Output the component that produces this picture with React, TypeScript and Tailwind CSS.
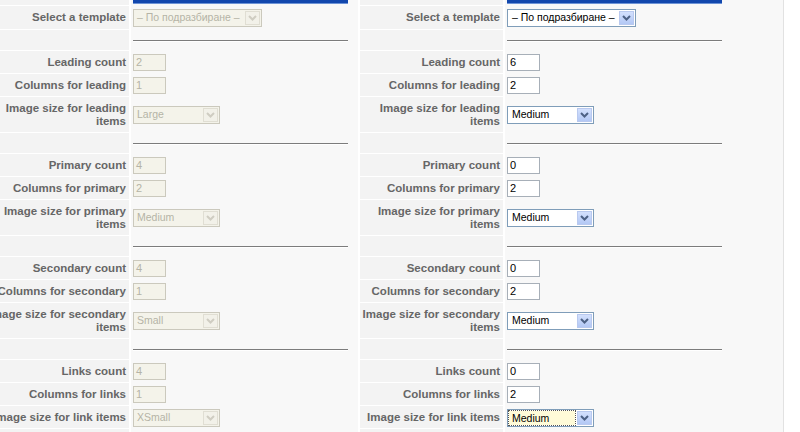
import React from "react";

type Side = { count: string; cols: string; img: string };
type Group = { count: string; cols: string; img: string; L: Side; R: Side };

const groups: Group[] = [
  { count: "Leading count", cols: "Columns for leading", img: "Image size for leading items", L: { count: "2", cols: "1", img: "Large" }, R: { count: "6", cols: "2", img: "Medium" } },
  { count: "Primary count", cols: "Columns for primary", img: "Image size for primary items", L: { count: "4", cols: "2", img: "Medium" }, R: { count: "0", cols: "2", img: "Medium" } },
  { count: "Secondary count", cols: "Columns for secondary", img: "Image size for secondary items", L: { count: "4", cols: "1", img: "Small" }, R: { count: "0", cols: "2", img: "Medium" } },
  { count: "Links count", cols: "Columns for links", img: "Image size for link items", L: { count: "4", cols: "1", img: "XSmall" }, R: { count: "0", cols: "2", img: "Medium" } },
];

const Chevron = ({ color }: { color: string }) => (
  <svg width="9" height="6" viewBox="0 0 9 6">
    <path d="M1 1 L4.5 4.5 L8 1" fill="none" stroke={color} strokeWidth="2" />
  </svg>
);

function TextBox({ value, disabled }: { value: string; disabled?: boolean }) {
  return (
    <div
      className={
        disabled
          ? "w-[33px] h-[17px] border border-[#cbc9bd] bg-[#f4f3ea] text-[#b5b3a6] text-[11px] leading-[15px] pl-[2px]"
          : "w-[33px] h-[17px] border border-[#a7afb8] bg-white text-black text-[11px] leading-[15px] pl-[2px]"
      }
    >
      {value}
    </div>
  );
}

function SelectBox({ value, width, disabled, focused }: { value: string; width: string; disabled?: boolean; focused?: boolean }) {
  if (disabled) {
    return (
      <div className={`${width} h-[18px] border border-[#cbc9bd] bg-[#f4f3ea] flex items-center text-[#b5b3a6] text-[10.5px]`}>
        <span className="flex-1 pl-[3px] whitespace-nowrap overflow-hidden">{value}</span>
        <span className="w-[15px] h-[14px] mr-[1px] border border-[#e0ded3] bg-[#f2f1e9] flex items-center justify-center">
          <Chevron color="#cfcdc2" />
        </span>
      </div>
    );
  }
  return (
    <div className={`${width} h-[18px] border border-[#7f9db9] bg-white flex items-center text-black text-[10.5px]`}>
      {focused ? (
        <span className="flex-1 h-[14px] ml-[1px] mr-[2px] bg-[#fffbd8] outline outline-1 outline-dotted outline-[#555] leading-[14px] pl-[3px] whitespace-nowrap overflow-hidden">
          {value}
        </span>
      ) : (
        <span className="flex-1 pl-[4px] whitespace-nowrap overflow-hidden">{value}</span>
      )}
      <span className="w-[15px] h-[14px] mr-[1px] border border-[#b9c9ef] bg-gradient-to-b from-[#d3e0fd] to-[#b3c8f5] flex items-center justify-center">
        <Chevron color="#4d6185" />
      </span>
    </div>
  );
}

function Label({ children, h }: { children?: React.ReactNode; h: string }) {
  return (
    <div className={`w-[143px] shrink-0 ${h} bg-[#f3f3f3] border-b border-white flex items-center justify-end text-right pr-[3px] font-bold text-[#666] text-[11.5px] leading-[13px]`}>
      <span>{children}</span>
    </div>
  );
}

function Value({ children, w, h, last }: { children?: React.ReactNode; w: string; h: string; last?: boolean }) {
  return (
    <div className={`${w} shrink-0 ${h} bg-[#f8f8f8] flex items-center pl-[2px] ${last ? "border-r border-[#e2e2e2]" : ""}`}>
      {children}
    </div>
  );
}

function Row({ h, label, left, right }: { h: string; label?: string; left?: React.ReactNode; right?: React.ReactNode }) {
  return (
    <div className="flex gap-[2px]">
      <Label h={h}>{label}</Label>
      <Value w="w-[227px]" h={h}>{left}</Value>
      <Label h={h}>{label}</Label>
      <Value w="w-[279px]" h={h} last>{right}</Value>
    </div>
  );
}

const Hr = () => <div className="w-[215px] h-[2px] border-t border-[#7c7c7c] border-b border-b-white" />;

export default function App() {
  return (
    <div className="w-[800px] h-[432px] overflow-hidden bg-white" style={{ fontFamily: '"Liberation Sans", Arial, sans-serif' }}>
      <div className="ml-[-14px] flex flex-col">
        <div className="flex gap-[2px]">
          <Label h="h-[6px]" />
          <div className="w-[227px] h-[6px] bg-[#f8f8f8] pl-[2px]">
            <div className="w-[215px] h-[4px] bg-[#1247ad] border-b border-[#6d93d6]" />
          </div>
          <Label h="h-[6px]" />
          <div className="w-[279px] h-[6px] bg-[#f8f8f8] pl-[2px] border-r border-[#e2e2e2]">
            <div className="w-[215px] h-[4px] bg-[#1247ad] border-b border-[#6d93d6]" />
          </div>
        </div>
        <Row
          h="h-[24px]"
          label="Select a template"
          left={<SelectBox value="– По подразбиране –" width="w-[129px]" disabled />}
          right={<SelectBox value="– По подразбиране –" width="w-[129px]" />}
        />
        {groups.map((g, i) => (
          <React.Fragment key={i}>
            <Row h="h-[21px]" left={<Hr />} right={<Hr />} />
            <Row h="h-[23px]" label={g.count} left={<TextBox value={g.L.count} disabled />} right={<TextBox value={g.R.count} />} />
            <Row h="h-[23px]" label={g.cols} left={<TextBox value={g.L.cols} disabled />} right={<TextBox value={g.R.cols} />} />
            <Row
              h={i === 3 ? "h-[23px]" : "h-[36px]"}
              label={g.img}
              left={<SelectBox value={g.L.img} width="w-[87px]" disabled />}
              right={<SelectBox value={g.R.img} width="w-[87px]" focused={i === 3} />}
            />
          </React.Fragment>
        ))}
        <Row h="h-[21px]" left={<Hr />} right={<Hr />} />
      </div>
    </div>
  );
}
